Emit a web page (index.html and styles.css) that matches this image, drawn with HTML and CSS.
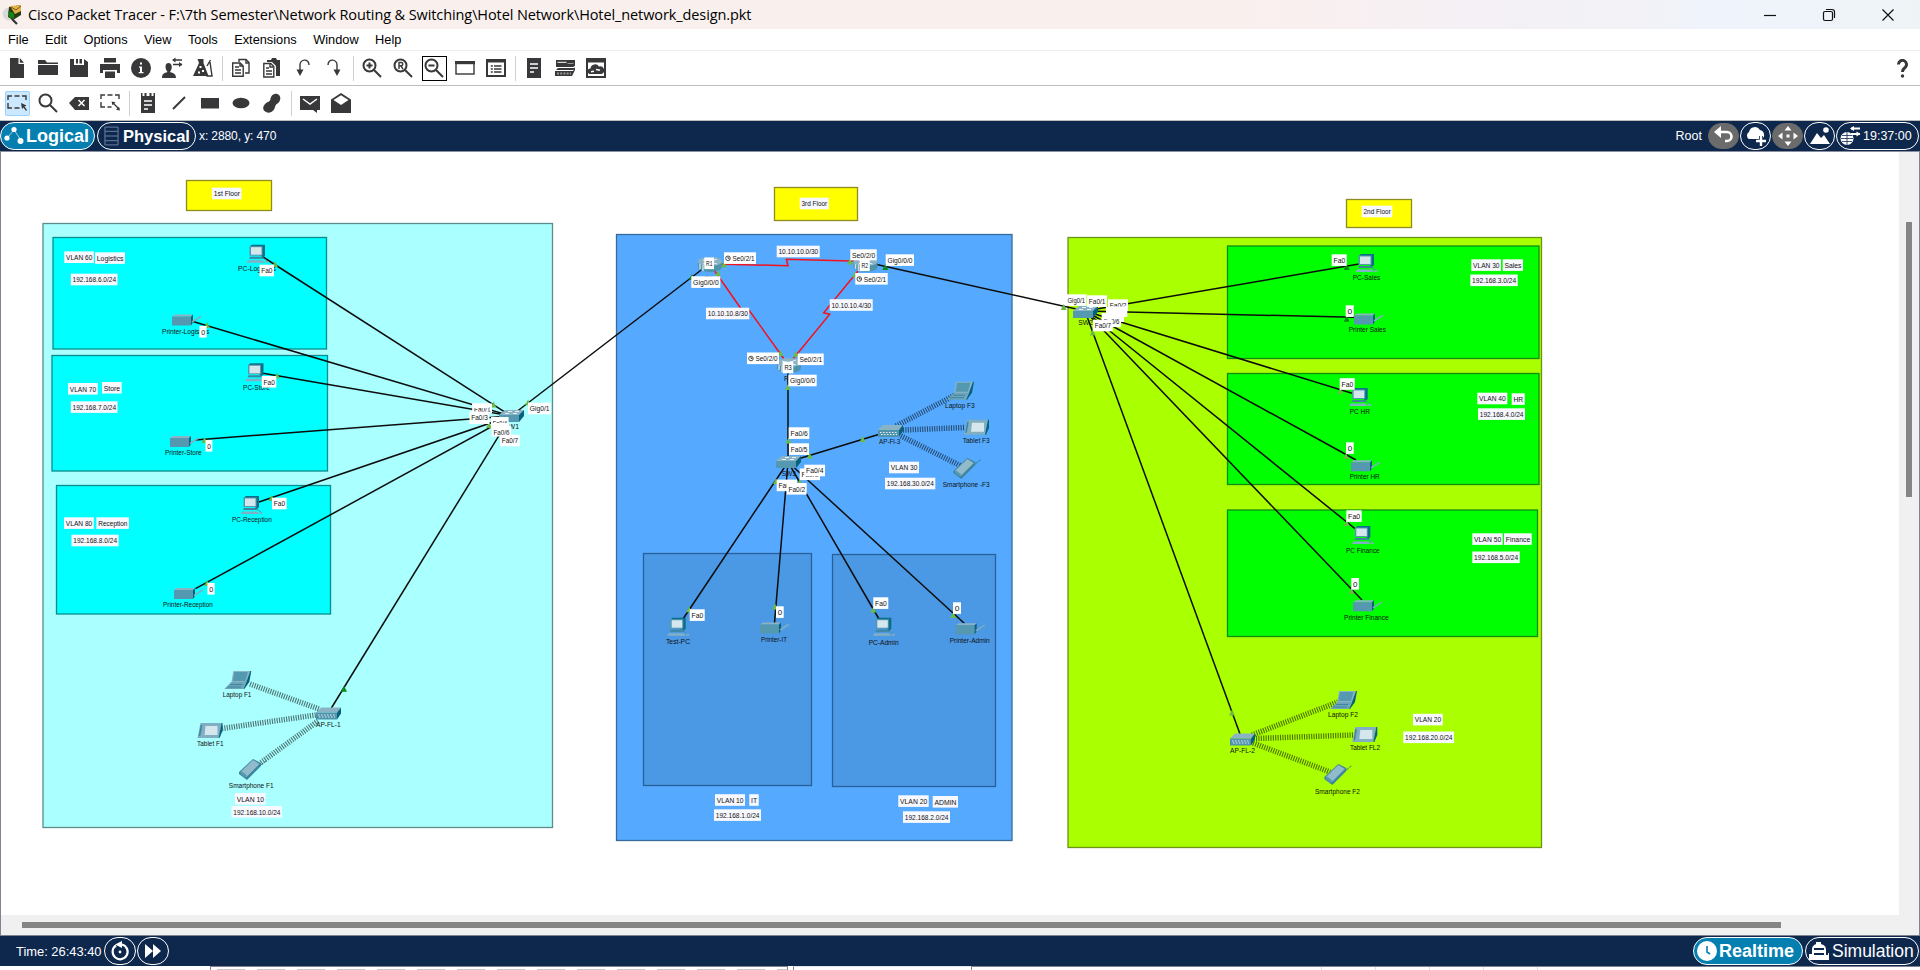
FILE: index.html
```html
<!DOCTYPE html>
<html lang="en">
<head>
<meta charset="utf-8">
<title>Cisco Packet Tracer</title>
<link rel="stylesheet" href="styles.css">
</head>
<body>
<header class="titlebar">
  <svg class="app-icon" viewBox="0 0 20 20"><circle cx="7" cy="9" r="6.500" fill="#d9d9d9"/><path d="M7 2l12-2 0 10-8 5-5-3z" fill="#2a3b14"/><path d="M8 1l11-1v6l-6 3z" fill="#e2b34a"/><path d="M9 2l5 3 5-4" stroke="#7c5a14" fill="none"/><path d="M6 6l6 2v6l-5-2z" fill="#17821c"/><path d="M10 14l5 5" stroke="#333" stroke-width="2.200"/></svg>
  <h1 class="title">Cisco Packet Tracer - F:\7th Semester\Network Routing &amp; Switching\Hotel Network\Hotel_network_design.pkt</h1>
  <div class="window-controls">
    <svg viewBox="0 0 14 14"><path d="M1 7.500h12"/></svg>
    <svg viewBox="0 0 14 14"><rect x="1.500" y="3.500" width="9" height="9" rx="1.500"/><path d="M4 1.500h6a2.500 2.500 0 0 1 2.500 2.500v6"/></svg>
    <svg viewBox="0 0 14 14"><path d="M1.500 1.500l11 11M12.500 1.500l-11 11"/></svg>
  </div>
</header>
<nav class="menubar"><span>File</span><span>Edit</span><span>Options</span><span>View</span><span>Tools</span><span>Extensions</span><span>Window</span><span>Help</span></nav>

<div class="toolbar">
  <span class="tool"><svg viewBox="0 0 20 20"><path d="M3 0h8.500v6H17v14H3z"/><path d="M12.800 0L17 4.700h-4.200z"/></svg></span>
  <span class="tool"><svg viewBox="0 0 20 20"><path d="M0 2h7l2 2.500h11V6H0zM0 7h20v10H0z"/></svg></span>
  <span class="tool"><svg viewBox="0 0 20 20"><path d="M1 1h4v6h10V1l4 3v15H1z"/><path d="M10.500 1H13v4.500h-2.500zM7 1h2v4.500H7z"/></svg></span>
  <span class="tool"><svg viewBox="0 0 20 20"><path d="M4 0h12v4.500H4zM0 6h20v9h-3v-3H3v3H0z"/><path d="M5 13.500h10V20H5z"/></svg></span>
  <span class="tool"><svg viewBox="0 0 20 20"><circle cx="10" cy="10" r="10"/><path d="M9 4.500h2v2H9zM8 8.500h3V14h1.500v1.200H7.700V14H9V9.700H8z" fill="#fff"/></svg></span>
  <span class="tool"><svg viewBox="0 0 20 20"><path d="M0 20c0-4 2-5 5.500-6-3-4-2.500-9 1-9s4.500 5 1.500 9c3.500 1 6 2 6 6z"/><path d="M11 2h9M11 6.500h9" class="line"/><path d="M10 2l3.500-2.500v5zM20.500 6.500L17 4v5z"/></svg></span>
  <span class="tool"><svg viewBox="0 0 20 20"><path d="M0 18L6 5 4.500 1h6v4l5 13z"/><path d="M14 8l3.500-6M17 4l2 14h-5l-2-5" class="line"/><path d="M6.500 8h2v2h-2zM9 12h2v2H9zM5 13.500h2v2H5z" fill="#fff"/></svg></span>
  <i class="sep"></i>
  <span class="tool"><svg viewBox="0 0 20 20"><path d="M8 4V1.500h7l3 3V15h-4" class="line"/><path d="M1.700 5h7.500l3 3v10.300H1.700z" class="line"/><path d="M4 9h4M4 12h6M4 15h6M9 5v3h3M15 2v3h3" class="line"/></svg></span>
  <span class="tool"><svg viewBox="0 0 20 20"><path d="M5 2h4l1-2h4l1 2h3v16h-4V8l-4-4H5z"/><path d="M1.800 5.500h7l3 3V19h-10z" class="line"/><path d="M4 10h3M4 13h6M4 16h6M8 6v3h3" class="line"/></svg></span>
  <span class="tool"><svg viewBox="0 0 20 20"><path d="M16 7c0-7-9-6-9 0v6" class="line"/><path d="M3.500 11.500h7L7 18z"/></svg></span>
  <span class="tool"><svg viewBox="0 0 20 20"><path d="M4 7c0-7 9-6 9 0v6" class="line"/><path d="M9.500 11.500h7L13 18z"/></svg></span>
  <i class="sep"></i>
  <span class="tool"><svg viewBox="0 0 20 20"><circle cx="7.500" cy="7.500" r="6" class="bold"/><path d="M12 12l7 7M4.500 7.500h6M7.500 4.500v6" class="bold"/></svg></span>
  <span class="tool"><svg viewBox="0 0 20 20"><circle cx="7.500" cy="7.500" r="6" class="bold"/><path d="M12 12l7 7" class="bold"/><path d="M6 11V4.500h2.200a1.600 1.600 0 0 1 0 3.200H6M8 8l2 3" class="line"/></svg></span>
  <span class="tool boxed"><svg viewBox="0 0 20 20"><circle cx="7.500" cy="7.500" r="6" class="bold"/><path d="M12 12l7 7M4.500 7.500h6" class="bold"/></svg></span>
  <span class="tool"><svg viewBox="0 0 20 20"><rect x="1" y="4" width="18" height="12" class="line"/><path d="M0 3h20v3.200H0z"/></svg></span>
  <span class="tool"><svg viewBox="0 0 20 20"><rect x="1" y="2" width="18" height="16" class="bold"/><path d="M0 1h20v3.500H0z"/><path d="M8 8h7.500M8 11h7.500M8 14h7.500M4.800 8h2M4.800 11h2M4.800 14h2" class="line"/></svg></span>
  <i class="sep"></i>
  <span class="tool"><svg viewBox="0 0 20 20"><path d="M3 0h14v20H3z"/><path d="M6 6h8M6 10h8M6 14h4" class="white"/></svg></span>
  <span class="tool"><svg viewBox="0 0 20 20"><path d="M1 2h19v6l-2 1H1zM3 10h17l-2 2H1zM0 13h18l2-4v3l-3 6H0z"/><path d="M2.500 4.300h9" stroke="#fff"/><path d="M12.500 5.500h6" stroke="#999"/><path d="M2 15.500h14" stroke="#999" stroke-width="2" stroke-dasharray="2 1.200"/></svg></span>
  <span class="tool"><svg viewBox="0 0 20 20"><rect x="1" y="1" width="18" height="18" class="bold"/><path d="M0 0h20v4.500H0z"/><path d="M4.500 16a2.800 2.800 0 0 1 0-5.600 4.600 4.600 0 0 1 8.500-1.800A3.800 3.800 0 0 1 15.500 16z"/><path d="M5 13.800l3-.5M10 11.500l4 .8" class="white"/></svg></span>
  <svg class="help" viewBox="0 0 11 19"><path d="M1.500 5.500a4 4 0 1 1 6.500 3C6 10 5.500 10.500 5.500 13" fill="none" stroke="#38383a" stroke-width="3"/><circle cx="5.500" cy="17" r="1.700" fill="#38383a"/></svg>
</div>

<div class="toolbar">
  <span class="tool selected"><svg viewBox="0 0 20 20"><path d="M1 7V3h4M7.500 3h5M15 3h4v4M1 10v5h4M7.500 15h5" class="line"/><path d="M14 10l1 6 1.500-1.500L19 18l1-1-2.500-3.500 2-1z"/></svg></span>
  <span class="tool"><svg viewBox="0 0 20 20"><circle cx="7.500" cy="7.500" r="6" class="bold"/><path d="M12 12l7 7" class="bold"/></svg></span>
  <span class="tool"><svg viewBox="0 0 20 20"><path d="M0 10l6-6h14v13H6z"/><path d="M9.500 7l6 6M15.500 7l-6 6" class="white"/></svg></span>
  <span class="tool"><svg viewBox="0 0 20 20"><path d="M1 6V2h4M7.500 2h5M15 2h4v4M1 9v5h4M7.500 14h4M13 10l6 6" class="line"/><path d="M11.500 8.500l4 .8-3 3zM20 17.500l-4-.8 3-3z"/></svg></span>
  <i class="sep"></i>
  <span class="tool"><svg viewBox="0 0 20 20"><path d="M3 0h1.500v3h2V0h2v3h3V0h2v3h2V0H17v20H3z"/><path d="M6 8h8M6 12h8M6 16h4" class="white"/></svg></span>
  <span class="tool"><svg viewBox="0 0 20 20"><path d="M4 16L16 4" class="bold"/></svg></span>
  <span class="tool"><svg viewBox="0 0 20 20"><path d="M1 5h18v10.500H1z"/></svg></span>
  <span class="tool"><svg viewBox="0 0 20 20"><ellipse cx="10" cy="10" rx="8.500" ry="5.300"/></svg></span>
  <span class="tool"><svg viewBox="0 0 20 20"><path d="M9 4c3-6 11-3 9 3-1 4-4 3-5 7s-5 7-9 5c-6-3-1-9 2-10s2-3 3-5z"/></svg></span>
  <i class="sep"></i>
  <span class="tool"><svg viewBox="0 0 20 20"><path d="M0 3h20v14h-3v3l-4-3H0z"/><path d="M3 6l7 5 7-5" class="white"/></svg></span>
  <span class="tool"><svg viewBox="0 0 20 20"><path d="M0 6.500L10 0l10 6.500V20H0z"/><path d="M2.500 7L10 2.200 17.500 7 10 12z" fill="#fff"/></svg></span>
</div>

<div class="viewbar">
  <div class="pill logical"><svg viewBox="0 0 20 20"><path d="M3 12l7-8 7 10" stroke="#cfe6f0" stroke-width=".8" fill="none"/><circle cx="10" cy="3.500" r="2.600"/><circle cx="3" cy="12" r="2.600"/><circle cx="16.500" cy="15" r="3"/></svg>Logical</div>
  <div class="pill physical"><svg viewBox="0 0 16 20" fill="none" stroke="#7186a8"><path d="M1 .5h14v19H1zM1 5h14M1 10h14M1 15h14"/></svg>Physical</div>
  <span class="coords">x: 2880, y: 470</span>
  <div class="view-actions">
    <span class="root">Root</span>
    <span class="round grey"><svg viewBox="0 0 20 20"><path d="M4 6h9a4.500 4.500 0 0 1 0 9h-2" stroke="#fff" stroke-width="2.600" fill="none"/><path d="M0 6l7-6v12z"/></svg></span>
    <span class="round"><svg viewBox="0 0 20 20"><path d="M3 13a4 4 0 0 1 0-7 6 6 0 0 1 11-2 5 5 0 0 1 2 9z"/><path d="M15 10v10M10 15h10" stroke="#0e284d" stroke-width="4"/><path d="M15 10v10M10 15h10" stroke="#fff" stroke-width="2.400"/></svg></span>
    <span class="round grey"><svg viewBox="0 0 20 20"><path d="M10 0l3.500 4.500h-7zM10 20l3.500-4.500h-7zM0 10l4.500-3.500v7zM20 10l-4.500-3.500v7zM8.500 8.500h3v3h-3z"/></svg></span>
    <span class="round"><svg viewBox="0 0 20 20"><path d="M0 18L7 7l4 5 3-3 6 9z"/><circle cx="16" cy="4" r="2.800"/></svg></span>
    <span class="pill clock"><svg viewBox="0 0 20 20"><circle cx="7" cy="12.500" r="6.500"/><path d="M1 12.500h12M7 6v13M2 9.500h10M2 15.500h10" stroke="#0e284d" stroke-width=".8"/><path d="M11 2.500h9M11 8h9" stroke="#fff" stroke-width="1.800"/><path d="M10 2.500l4-2.500v5zM20.500 8l-4-2.500v5z"/></svg>19:37:00</span>
  </div>
</div>

<main class="workspace">
  <svg class="topology" id="topology" viewBox="1 152 1898 763">
    <defs>
      <symbol id="pc" viewBox="0 0 22 18" overflow="visible">
        <path d="M3 1.500L5 0h13v11l-2 2z" fill="#0a6e88"/><path d="M2.500 1.500h13V11h-13z" fill="#5499b0"/><path d="M4 2.500h10.500v7.500H4z" fill="#d5e6ed"/>
        <path d="M3 12h13l1 2H2z" fill="#3d859e"/><path d="M1 15.500h15l2 2.500H-.500z" fill="#80b0c4"/><ellipse cx="20" cy="17" rx="1.800" ry="1" fill="#7fb0c2"/><path d="M17 14l3 2" stroke="#5499b0" fill="none"/>
      </symbol>
      <symbol id="printer" viewBox="0 0 29 11" overflow="visible">
        <path d="M0 2l3-2h18l-2 2z" fill="#8ab4c6"/><path d="M0 2h19v9H0z" fill="#5499b0"/><path d="M19 2l2-2v8l-2 3z" fill="#06617d"/><path d="M20 7.500l7-4.500 2-1" stroke="#7fb0c2" stroke-width="1.500"/>
      </symbol>
      <symbol id="switch" viewBox="0 0 25 12" overflow="visible">
        <path d="M0 5l6-5h19l-4 5z" fill="#8ab4c6"/><path d="M0 5h20v7H0z" fill="#5499b0"/><path d="M20 5l5-5v6l-5 6z" fill="#06617d"/><path d="M6 3.500h4M9 1.500h4M14 3.500h4M16 1.500h4" stroke="#e6f1f5"/>
      </symbol>
      <symbol id="ap" viewBox="0 0 25 12" overflow="visible">
        <path d="M0 5l5-5h20l-4 5z" fill="#8ab4c6"/><path d="M0 5h21v7H0z" fill="#4f94ac"/><path d="M21 5l4-5v6l-4 6z" fill="#06617d"/><path d="M2 7.500h17M3 9.500h16" stroke="#e6f1f5" stroke-dasharray="1.500 1.500"/>
      </symbol>
      <symbol id="laptop" viewBox="0 0 27 18" overflow="visible">
        <path d="M9 0h17l-4 12H7z" fill="#8ab4c6"/><path d="M10 1h13.500l-2.500 9H8.500z" fill="#5499b0"/><path d="M26 0h1l-2 11-5 7h-1l3-7z" fill="#06617d"/><path d="M7 11h15l-3 7H0z" fill="#6da5ba"/><path d="M6 13.500h12M3 16h14" stroke="#3d859e"/>
      </symbol>
      <symbol id="tablet" viewBox="0 0 25 15" overflow="visible">
        <path d="M3 0h21l-3 15H0z" fill="#80aec2"/><path d="M24 0h1v8l-3 7h-1z" fill="#06617d"/><path d="M8 3h12v9H7z" fill="#d5e6ed"/><path d="M4 2L2 13" stroke="#3d859e" stroke-width="1.500"/>
      </symbol>
      <symbol id="phone" viewBox="0 0 27 21" overflow="visible">
        <path d="M14 0l8 4v3L8 21l-8-6v-2z" fill="#3d859e"/><path d="M14 1l6.500 4L7.500 18l-6-5z" fill="#91bacb"/><path d="M3 12.500l5 4-2 2-5-4z" fill="#5499b0"/><path d="M22 6l5-4" stroke="#34758c" stroke-dasharray="3 1"/>
      </symbol>
      <symbol id="router" viewBox="0 0 24 15" overflow="visible">
        <path d="M0 4v6a12 5 0 0 0 24 0V4z" fill="#4e93a9"/><path d="M2 5v7M5 5v9" stroke="#c9dfe8" stroke-width="1.500"/><ellipse cx="12" cy="4.500" rx="12" ry="4.500" fill="#8ab4c6"/><path d="M5 3l14 4M19 2L5 7" stroke="#e6f1f5"/>
      </symbol>
      <symbol id="clock" viewBox="0 0 6 6" overflow="visible"><circle cx="3" cy="3" r="2.300" fill="none" stroke="#222" stroke-width=".8"/><path d="M3 1.500V3h1.500" stroke="#222" stroke-width=".8" fill="none"/></symbol>
    </defs>
  </svg>
  <div class="vscroll"><div class="vthumb"></div></div>
  <div class="hscroll"><div class="hthumb"></div></div>
</main>

<footer class="statusbar">
  <span class="time">Time: 26:43:40</span>
  <span class="round"><svg viewBox="0 0 20 20"><path d="M6 4.500a7.500 7.500 0 1 0 6-1" stroke="#fff" stroke-width="2.200" fill="none"/><path d="M5 3.500l7-3.500v7z"/><circle cx="10" cy="11" r="1.400"/></svg></span>
  <span class="round"><svg viewBox="0 0 20 20"><path d="M2 3l8 7-8 7zM10 3l8 7-8 7z"/></svg></span>
  <div class="modes">
    <div class="pill realtime"><svg viewBox="0 0 20 20"><circle cx="10" cy="10" r="10"/><path d="M10 5v6l3 2" stroke="#0480b1" stroke-width="1.600" fill="none"/></svg>Realtime</div>
    <div class="pill simulation"><svg viewBox="0 0 20 20"><path d="M3 9c0-4 2-5 4-6l0-2h5v2c3 1 5 2 5 6v5h2v-2h1v7H0v-6h3z"/><path d="M5 8h10M5 13h10" stroke="#0e284d" stroke-width="1.800"/></svg>Simulation</div>
  </div>
</footer>
<div class="panels"><div class="device-panel"></div><div class="gap-panel"></div><div class="event-panel"><i></i><i></i><i></i><i></i><i></i></div></div>
<script src="topology.js"></script>
</body>
</html>
```
FILE: styles.css
```css
* { box-sizing: border-box; }
body {
  margin: 0; width: 1920px; height: 970px; overflow: hidden;
  display: flex; flex-direction: column;
  background: #fff; color: #000;
  font: 13px "Liberation Sans", Arial, sans-serif;
}
svg { display: block; }

.titlebar {
  flex: none; height: 29px; display: flex; align-items: center; padding-left: 2px;
  background: linear-gradient(90deg, #f9f0ed 0, #f9f0ed 1200px, #f9efef 1300px, #f4f0f5 1480px, #f1f2f7 1660px, #eff3fb 1700px, #eff3fa 1800px, #eef4f6 1920px);
}
.app-icon { width: 20px; height: 20px; }
.title { margin: 0 auto 0 6px; font: 400 14.5px/29px "Open Sans", "Noto Sans", sans-serif; letter-spacing: -0.1px; white-space: nowrap; }
.window-controls { display: flex; gap: 45px; padding-right: 25px; }
.window-controls svg { width: 14px; height: 14px; fill: none; stroke: #111; stroke-width: 1.2; }

.menubar { flex: none; height: 22px; padding: 0 8px; display: flex; gap: 16.4px; align-items: center; border-bottom: 1px solid #eee; font-size: 12.8px; }

.toolbar { flex: none; height: 35px; display: flex; align-items: center; padding-left: 1.5px; border-bottom: 1px solid #bdbdbd; }
.tool { width: 31px; height: 25px; display: flex; align-items: center; justify-content: center; }
.tool svg { width: 20px; height: 20px; fill: #38383a; overflow: visible; }
.tool .line { fill: none; stroke: #38383a; stroke-width: 1.4; }
.tool .bold { fill: none; stroke: #38383a; stroke-width: 2; }
.tool .white { fill: none; stroke: #fff; stroke-width: 1.5; }
.boxed { width: 25px; margin: 0 3px; border: 1px solid #000; }
.selected { width: 25px; margin: 0 3px; background: #cce8ff; border: 1px solid #99d1ff; border-radius: 2px; }
.sep { width: 1px; height: 25px; margin: 0 3px; background: #d0d0d0; }
.help { width: 11px; height: 19px; margin-left: auto; margin-right: 12px; }

.viewbar, .statusbar { flex: none; height: 30px; display: flex; align-items: center; background: #0e284d; color: #fff; }
.viewbar svg, .statusbar svg { fill: #fff; flex: none; }
.pill { height: 28px; display: flex; align-items: center; border: 1px solid #fff; border-radius: 14px; font-size: 18px; white-space: nowrap; }
.logical { width: 95px; padding-left: 3px; gap: 2px; background: #047fb0; font-weight: 700; }
.logical svg { width: 20px; height: 20px; }
.physical { width: 99px; margin-left: 2px; padding-left: 6px; gap: 4px; font-weight: 700; font-size: 16.5px; }
.viewbar .physical svg { width: 15px; height: 20px; fill: none; }
.coords { margin-left: 3px; font-size: 12px; letter-spacing: -0.1px; }
.view-actions { margin-left: auto; display: flex; align-items: center; gap: 1px; padding-right: 1px; }
.root { margin-right: 5px; font-size: 12.5px; }
.round { width: 31px; height: 28px; display: flex; align-items: center; justify-content: center; border: 1px solid #fff; border-radius: 14px; }
.round svg { width: 20px; height: 20px; }
.grey { background: #6b6b6b; border-color: #6b6b6b; height: 26px; }
.clock { width: 83px; padding-left: 3px; gap: 3px; font-size: 12.5px; }
.clock svg { width: 20px; height: 20px; overflow: visible; }

.workspace {
  flex: none; height: 785px; display: grid;
  grid-template: 763px 21px / 1898px 20px;
  border: 1px solid #7f8492; border-bottom: 0; border-top-color: #8b90a0;
  box-shadow: inset 0 -1px #7f8492; background: #fff;
}
.topology { width: 1898px; height: 763px; }
.vscroll { background: #f0f0f0; padding: 70px 0 0 7px; }
.vthumb { width: 6px; height: 275px; background: #858585; }
.hscroll { grid-column: 1 / 3; height: 20px; background: #f0f0f0; padding: 7px 0 0 21px; }
.hthumb { width: 1759px; height: 6px; background: #858585; }

.statusbar { padding: 0 1px 0 16px; }
.time { width: 88px; font-size: 12.9px; }
.statusbar .round { width: 32px; margin-right: 1px; }
.modes { margin-left: auto; display: flex; gap: 2px; }
.modes svg { width: 20px; height: 20px; }
.realtime { width: 110px; padding-left: 3px; gap: 2px; background: #047fb0; font-weight: 700; }
.simulation { width: 114px; padding-left: 3px; gap: 3px; font-size: 17.5px; }

.panels { flex: 1; display: flex; padding-left: 210px; }
.device-panel {
  width: 578px; border: 1px solid #7f8492; border-bottom: 0;
  background: linear-gradient(#fff 2px, transparent 2px), repeating-linear-gradient(90deg, #fff 0 6px, #c8c8c8 6px 34px, #fff 34px 40px);
}
.gap-panel { width: 178px; margin-left: 5px; border-left: 1px solid #7f8492; border-top: 1px solid #e4e4e4; }
.event-panel { flex: 1; display: flex; border-top: 1px solid #7f8492; border-left: 1px solid #7f8492; padding-left: 349px; }
.event-panel i { width: 1px; margin-right: 53px; background: #ddd; }

.zone { stroke-width: 1.3; }
.link { stroke: #0c0c0c; stroke-width: 1.5; fill: none; }
.serial { stroke: #f5101c; stroke-width: 1.5; fill: none; }
.radio { stroke: #000; stroke-opacity: .55; stroke-width: 5.5; stroke-dasharray: 1.1 1.3; }
.tag, .name { font: 7.5px "Liberation Sans", Arial, sans-serif; fill: #111; }
.note-box { fill: #f8f8ff; }
.port-box, .clock-box { fill: #fff; }
```
FILE: topology.js
```js
const svg = document.getElementById('topology');
const NS = 'http://www.w3.org/2000/svg';

function add(tag, attrs, text) {
  const el = document.createElementNS(NS, tag);
  for (const key in attrs) el.setAttribute(key, attrs[key]);
  if (text) el.textContent = text;
  svg.appendChild(el);
}

// Floors, departments and floor captions: x1, y1, x2, y2, fill, border
[
  [186.5, 180.5, 271.5, 210.5, '#ffff00', '#8c8c20'],
  [43, 223.5, 552.5, 827.5, '#aaffff', '#5c8c8c'],
  [53, 237.5, 326.5, 349, '#00ffff', '#0a8c8c'],
  [52, 355.5, 327.5, 471, '#00ffff', '#0a8c8c'],
  [56.5, 485.5, 330.5, 614, '#00ffff', '#0a8c8c'],
  [774.5, 187.5, 857.5, 220.5, '#ffff00', '#8c8c20'],
  [616.5, 234.5, 1012, 840.5, '#55aaff', '#3a6a9c'],
  [643.5, 553.5, 811.5, 785.5, '#4b98e4', '#29609a'],
  [832.5, 554.5, 995.5, 786.5, '#4b98e4', '#29609a'],
  [1346.5, 199.5, 1411.5, 227.5, '#ffff00', '#8c8c20'],
  [1068, 237.5, 1541.5, 847.5, '#aaff00', '#6c9416'],
  [1227.5, 246, 1539, 358.5, '#00ff00', '#108c10'],
  [1227.5, 373.5, 1539, 484.5, '#00ff00', '#108c10'],
  [1227.5, 510, 1537.5, 636.5, '#00ff00', '#108c10']
].forEach(([x, y, x2, y2, fill, stroke]) =>
  add('rect', { class: 'zone', x, y, width: x2 - x, height: y2 - y, fill, stroke }));

// Copper links
[
  '263,257 511,416', '193,321.5 511,416', '263,373.3 511,416', '195,440 511,416',
  '259,502 511,416', '195.5,588.7 511,416', '331.4,708 511,416', '511,416 709,264',
  '870,263 1085,311', '788,370 788,460', '788,462 890,431',
  '683,619 788,462', '774.5,623 788,462', '879,619 788,462', '964.5,623.5 788,462',
  '1359,264 1085,311', '1354,317.3 1085,311', '1352,393.3 1085,311', '1356,460 1085,311',
  '1355,528.7 1085,311', '1362,600 1085,311', '1240,734 1085,311'
].forEach(points => add('polyline', { class: 'link', points }));

// Serial links
['715,264 788,265.7 786.3,259.3 860,261.3', '714,270 747.5,318 749,310 784,359', '858,271 823.7,312.7 829.7,314.2 793,359']
  .forEach(points => add('polyline', { class: 'serial', points }));

// Wireless associations
[
  [250, 684, 319, 709], [222, 728.5, 316, 715], [261, 762.5, 318, 721],
  [896, 426, 956, 394.5], [903, 430, 965, 427.5], [901, 436, 960, 465.5],
  [1252, 735, 1338, 702], [1256, 738.5, 1353, 735], [1253, 743, 1330, 772]
].forEach(([x1, y1, x2, y2]) => add('line', { class: 'radio', x1, y1, x2, y2 }));

// Device captions: text, x1, x2, baseline
[
  ['PC-Logistics', 238, 276, 270.7], ['Printer-Logistics', 162, 209.3, 333.7],
  ['PC-Store', 243, 270, 389.7], ['Printer-Store', 165, 201.7, 455],
  ['PC-Reception', 232, 271.7, 521.7], ['Printer-Reception', 163, 212.8, 606.7],
  ['Laptop F1', 222.7, 251.4, 696.7], ['Tablet F1', 197, 223.5, 745.7],
  ['Smartphone F1', 228.8, 273.6, 787.7], ['AP-FL-1', 316, 340.6, 726.7],
  ['SW1', 504, 519, 429], ['SW3', 781.7, 796, 476.3], ['SW2', 1078.3, 1093, 325],
  ['R1', 705, 713, 280.5], ['R3', 784, 793, 380.7],
  ['AP-Fl-3', 879, 900.3, 443.7], ['Laptop F3', 945, 974.7, 408],
  ['Tablet F3', 962.7, 989.7, 442.7], ['Smartphone -F3', 942.7, 989.7, 486.7],
  ['Test-PC', 666, 690, 643.7], ['Printer-IT', 761, 787, 641.7],
  ['PC-Admin', 868.7, 898.7, 644.7], ['Printer-Admin', 949.7, 989.7, 642.7],
  ['PC-Sales', 1352.7, 1380.3, 279.7], ['Printer Sales', 1348.7, 1386, 331.7],
  ['PC HR', 1349.7, 1370, 413.7], ['Printer HR', 1349.7, 1379.7, 478.7],
  ['PC Finance', 1346, 1379.7, 553], ['Printer Finance', 1344, 1388.7, 619.7],
  ['AP-FL-2', 1230, 1255, 752.7], ['Laptop F2', 1328, 1358, 716.7],
  ['Tablet FL2', 1350, 1380, 749.7], ['Smartphone F2', 1315, 1360, 793.7]
].forEach(([text, x1, x2, y]) =>
  add('text', { class: 'name', x: x1, y, textLength: x2 - x1, lengthAdjust: 'spacingAndGlyphs' }, text));

// Device icons: kind, width, height, positions
[
  ['pc', 22, 18, [[247, 244.7], [245.5, 363.3], [241, 496], [667.7, 617.7], [873.3, 617.7], [1356, 254], [1349.7, 388], [1352.3, 526]]],
  ['printer', 29, 11, [[172, 314.5], [170, 436], [174, 588], [760, 622.5], [955.7, 623.3], [1354, 313.5], [1351, 460.3], [1353, 600.3]]],
  ['switch', 25, 12, [[499, 410], [776, 456], [1073, 306]]],
  ['ap', 25, 12, [[316, 707.5], [878, 425], [1230, 733.5]]],
  ['laptop', 27, 18, [[224.3, 671], [947, 381.7], [1330, 691]]],
  ['tablet', 25, 15, [[197.5, 723], [964, 419.7], [1352.3, 727]]],
  ['phone', 27, 21, [[239, 759], [953.3, 458], [1324.3, 764]]],
  ['router', 24, 15, [[698, 257], [853.5, 257], [777, 358]]]
].forEach(([kind, width, height, places]) =>
  places.forEach(([x, y]) => add('use', { href: '#' + kind, x, y, width, height })));

// Link status arrows
const light = [
  [275, 264], [207, 325], [277, 375.7], [204.5, 440], [271.5, 498], [207, 583], [493.5, 404.5], [528, 402.3], [489, 425],
  [724, 264.3], [850, 261.5], [855, 274.5], [718, 273], [780.5, 353], [795.7, 354], [788, 387], [788.5, 440.5], [809.7, 455.7],
  [862.7, 439], [776, 481], [799.7, 482], [689, 609.3], [775, 606.5], [873.3, 609.7], [953.3, 615],
  [1063.7, 307], [1092.7, 332.5], [1340.3, 391], [1346, 456], [1346.7, 523], [1351.5, 591], [1232, 712.5]
];
const dark = [[344, 688.7], [692, 277], [885.3, 267], [1346.7, 267], [1346.7, 318.7]];
const arrow = (fill, size) => ([x, y]) =>
  add('path', { d: `M${x - size} ${y + size}h${size * 2}l${-size} ${-size * 2}z`, fill });
light.forEach(arrow('#6abb45', 2.9));
dark.forEach(arrow('#0a8a18', 3));

// Labels: text, x1, y, x2, kind, height
function label([text, x1, y, x2, kind = 'port', h = 11.6]) {
  add('rect', { class: kind + '-box', x: x1, y, width: x2 - x1, height: h });
  if (!text) return;
  const inset = kind === 'clock' ? 8.5 : 1.8;
  if (kind === 'clock') add('use', { href: '#clock', x: x1 + 1, y: y + 3, width: 6, height: 6 });
  add('text', { class: 'tag', x: x1 + inset, y: y + 8.6, textLength: x2 - x1 - inset - 1.5, lengthAdjust: 'spacingAndGlyphs' }, text);
}
[
  ['1st Floor', 212, 187.7, 241.5, 'note'], ['3rd Floor', 799.7, 197.7, 828.7, 'note'], ['2nd Floor', 1361.7, 205.7, 1392.3, 'note'],
  ['VLAN 60', 64.3, 251.4, 93.8, 'note'], ['Logistics', 95, 252.3, 125, 'note'], ['192.168.6.0/24', 70.8, 273.7, 117.5, 'note'],
  ['VLAN 70', 68, 383, 97.7, 'note'], ['Store', 102, 382, 121.7, 'note'], ['192.168.7.0/24', 70.8, 401.3, 117.5, 'note'],
  ['VLAN 80', 64, 517.3, 93.8, 'note'], ['Reception', 96.4, 517.3, 129, 'note'], ['192.168.8.0/24', 71.5, 534.7, 118.6, 'note'],
  ['VLAN 10', 235, 793, 265.5, 'note'], ['192.168.10.0/24', 231.5, 806, 282, 'note'],
  ['10.10.10.0/30', 776.7, 245.7, 819.7, 'note'], ['10.10.10.8/30', 706, 307.7, 749.3, 'note'], ['10.10.10.4/30', 829.7, 299.2, 872.7, 'note'],
  ['VLAN 30', 889, 461.7, 919, 'note'], ['192.168.30.0/24', 885, 477.7, 935.3, 'note'],
  ['VLAN 10', 715, 794.2, 745, 'note'], ['IT', 749.3, 794.2, 758.7, 'note'], ['192.168.1.0/24', 714, 809.3, 761, 'note'],
  ['VLAN 20', 898.3, 795.3, 928.7, 'note'], ['ADMIN', 932.7, 796, 958, 'note'], ['192.168.2.0/24', 903, 811.3, 950, 'note'],
  ['VLAN 30', 1471.3, 259.3, 1501, 'note'], ['Sales', 1502.7, 259.3, 1523, 'note'], ['192.168.3.0/24', 1470.3, 274.5, 1517.7, 'note'],
  ['VLAN 40', 1477.3, 392.7, 1507.3, 'note'], ['HR', 1511.7, 393.3, 1524.7, 'note'], ['192.168.4.0/24', 1478, 408.3, 1525, 'note'],
  ['VLAN 50', 1472.3, 533.3, 1502.7, 'note'], ['Finance', 1504, 533.3, 1531.7, 'note'], ['192.168.5.0/24', 1472.3, 551.5, 1519.7, 'note'],
  ['VLAN 20', 1413, 713.8, 1442.7, 'note'], ['192.168.20.0/24', 1403.3, 731.5, 1454, 'note'],

  ['Fa0', 259.5, 264.7, 274], ['0', 199.4, 326, 206.6], ['Fa0', 261.8, 376, 276.3], ['0', 205.5, 440, 212.4],
  ['Fa0', 272, 497.7, 286.6], ['0', 207.4, 583, 214.7],
  ['Fa0/1', 472.2, 403.5, 492, 'port', 10], ['', 472.2, 403.5, 489, 'port', 4.5], ['Fa0/3', 469.5, 411.5, 489.4, 'port', 12.5],
  ['Fa0/4', 491, 417, 508.6], ['', 491, 423, 509.5, 'port', 6], ['Fa0/6', 491.7, 426, 511, 'port', 10.5], ['Fa0/7', 500, 434.7, 519.7], ['Gig0/1', 528, 402.7, 551],

  ['Se0/2/1', 724, 252.3, 756, 'clock'], ['R1', 704.3, 257.5, 714], ['Gig0/0/0', 691.3, 276.3, 720.3],
  ['R2', 859.7, 259.5, 869.7], ['Se0/2/0', 850.3, 249.3, 876.7, 'port', 11], ['Gig0/0/0', 885.7, 254.3, 914], ['Se0/2/1', 855.3, 273, 887.7, 'clock'],
  ['Se0/2/0', 747, 352.5, 779, 'clock'], ['Se0/2/1', 797.7, 353.5, 823.7], ['R3', 782.7, 361.7, 793.3], ['Gig0/0/0', 788.3, 374.7, 816.7],
  ['Fa0/6', 788.7, 427.3, 809.3], ['Fa0/5', 789, 443.3, 809], ['Fa0/3', 799.7, 468.5, 820], ['Fa0/4', 804.3, 464.7, 825],
  ['Fa0/1', 776.7, 479.6, 797], ['Fa0/2', 786.7, 483, 806.7],
  ['Fa0', 689.7, 609.3, 704.7], ['0', 776, 606.3, 783.7], ['Fa0', 873.3, 597.3, 888.3], ['0', 953, 602.3, 961],

  ['Gig0/1', 1065.7, 294.3, 1086.5], ['Fa0/1', 1087, 295.3, 1107], ['Fa0/2', 1108, 299.3, 1128],
  ['', 1106, 306.5, 1127.3, 'port', 10.5], ['', 1101.7, 313, 1124, 'port', 9], ['Fa0/6', 1102, 315.5, 1121], ['Fa0/7', 1093, 319.7, 1112.7],
  ['Fa0', 1331.7, 254.3, 1346.7], ['0', 1345.7, 305.3, 1353.7], ['Fa0', 1339.7, 378.2, 1354.7], ['0', 1346, 442.3, 1353.7],
  ['Fa0', 1346.3, 510.3, 1361.7], ['0', 1351.3, 578, 1359]
].forEach(label);
```
